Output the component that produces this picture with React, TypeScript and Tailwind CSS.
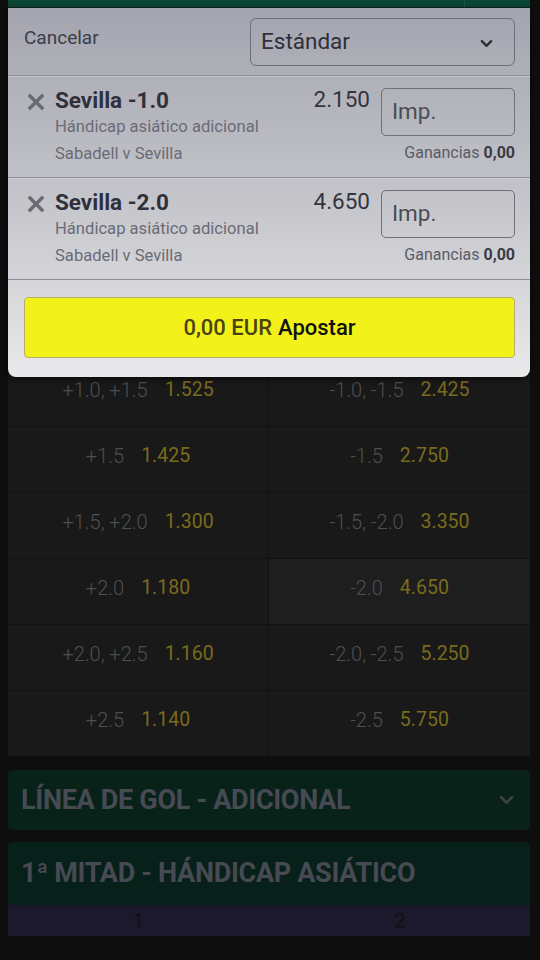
import React from 'react';

type Bet = { pick: string; odds: string };
type Line = { l: string; lo: string; r: string; ro: string; sel?: 'l' | 'r' };

const bets: Bet[] = [
  { pick: 'Sevilla -1.0', odds: '2.150' },
  { pick: 'Sevilla -2.0', odds: '4.650' },
];

const lines: Line[] = [
  { l: '+1.0, +1.5', lo: '1.525', r: '-1.0, -1.5', ro: '2.425' },
  { l: '+1.5', lo: '1.425', r: '-1.5', ro: '2.750' },
  { l: '+1.5, +2.0', lo: '1.300', r: '-1.5, -2.0', ro: '3.350' },
  { l: '+2.0', lo: '1.180', r: '-2.0', ro: '4.650', sel: 'r' },
  { l: '+2.0, +2.5', lo: '1.160', r: '-2.0, -2.5', ro: '5.250' },
  { l: '+2.5', lo: '1.140', r: '-2.5', ro: '5.750' },
];

function Chevron({ className }: { className?: string }) {
  return (
    <svg viewBox="0 0 14 9" className={className} fill="none" stroke="currentColor" strokeWidth="2.6" strokeLinecap="round" strokeLinejoin="round">
      <path d="M2 2l5 5 5-5" />
    </svg>
  );
}

function Cross() {
  return (
    <svg viewBox="0 0 18 18" className="w-[18px] h-[18px] text-[#696a73]" fill="none" stroke="currentColor" strokeWidth="3.4" strokeLinecap="square">
      <path d="M3 3l12 12M15 3L3 15" />
    </svg>
  );
}

function Divider() {
  return (
    <div>
      <div className="h-px bg-[#8d8e97]" />
      <div className="h-px bg-[#d3d4d9] opacity-60" />
    </div>
  );
}

function BetRow({ bet }: { bet: Bet }) {
  return (
    <div className="h-[100px] flex pl-[18px] pr-[15px] pt-[11px]">
      <div className="pt-[5px] w-[19px] flex justify-center">
        <Cross />
      </div>
      <div className="ml-[10px] flex-1 flex flex-col">
        <div className="text-[22.5px] leading-[24px] font-bold text-[#2f303a]">{bet.pick}</div>
        <div className="mt-[5px] text-[16.6px] leading-[20px] text-[#6a6b76]">Hándicap asiático adicional</div>
        <div className="mt-[7px] text-[16.6px] leading-[20px] text-[#6a6b76]">Sabadell v Sevilla</div>
      </div>
      <div className="flex flex-col items-end">
        <div className="flex items-start gap-[11px]">
          <div className="-mt-px text-[22.5px] leading-[24px] text-[#33343e]">{bet.odds}</div>
          <div className="w-[134px] h-[48px] border border-[#6f7079] rounded-[5px] px-[10px] flex items-center text-[22.5px] text-[#4a4b56]">
            Imp.
          </div>
        </div>
        <div className="mt-[7px] text-[16px] leading-[20px] text-[#5a5b66]">
          Ganancias <span className="font-bold text-[#3a3b45]">0,00</span>
        </div>
      </div>
    </div>
  );
}

function Cell({ label, odds, sel }: { label: string; odds: string; sel?: boolean }) {
  return (
    <div className={`h-[66px] flex items-center justify-center gap-[17px] pb-[8px] border-b border-[#111111] ${sel ? 'bg-[#1e1e1e]' : 'bg-[#191919]'}`}>
      <span className="text-[20px] font-light text-[#4f4f4f]">{label}</span>
      <span className="text-[19.5px] text-[#7a6b1c]">{odds}</span>
    </div>
  );
}

export default function App() {
  return (
    <div className="relative w-[540px] h-[960px] overflow-hidden bg-[#0e0e0e] font-['Roboto',sans-serif]">
      {/* page under the bet slip */}
      <div className="px-[8px] pr-[10px]">
        <div className="h-[8px] bg-[#0b4536] border-b border-[#08261e] flex">
          <div className="w-[457px] border-r border-[#135a47]" />
        </div>
        <div className="h-[353px] bg-[#191919]" />
        <div className="grid grid-cols-2">
          {lines.map((ln, i) => (
            <React.Fragment key={i}>
              <div className="border-r border-[#111111]">
                <Cell label={ln.l} odds={ln.lo} sel={ln.sel === 'l'} />
              </div>
              <Cell label={ln.r} odds={ln.ro} sel={ln.sel === 'r'} />
            </React.Fragment>
          ))}
        </div>

        <div className="mt-[13px] h-[60px] rounded-[4px] bg-[#08221a] flex items-center pl-[13px] pr-[16px]">
          <span className="text-[27px] font-bold tracking-[-0.3px] text-[#474a53]">LÍNEA DE GOL - ADICIONAL</span>
          <Chevron className="ml-auto w-[15px] h-[10px] text-[#3c4048]" />
        </div>

        <div className="mt-[12px] h-[63px] rounded-t-[4px] bg-[#08201a] flex items-center pl-[13px]">
          <span className="text-[27px] font-bold tracking-[-0.3px] text-[#474a53]">1ª MITAD - HÁNDICAP ASIÁTICO</span>
        </div>
        <div className="h-[31px] bg-[#1b192b] grid grid-cols-2 text-[20px] text-[#111111]">
          <div className="flex items-center justify-center">1</div>
          <div className="flex items-center justify-center">2</div>
        </div>
      </div>

      {/* bet slip overlay */}
      <div className="absolute left-[8px] top-[8px] w-[522px] rounded-b-[8px] bg-linear-to-b from-[#a3a4ae] via-[#c3c4c9] to-[#e9e9eb] shadow-[0_2px_6px_rgba(0,0,0,0.6)]">
        <div className="h-[67px] flex items-center pl-[16px] pr-[15px]">
          <span className="text-[19px] text-[#3b3d4a] -mt-[6px]">Cancelar</span>
          <div className="ml-auto w-[265px] h-[48px] border border-[#6e6f78] rounded-[6px] pl-[10px] pr-[21px] flex items-center text-[22.5px] text-[#2e2f39]">
            Estándar
            <Chevron className="ml-auto mt-[3px] w-[13px] h-[9px] text-[#2e2f39]" />
          </div>
        </div>
        <Divider />
        {bets.map((b, i) => (
          <React.Fragment key={i}>
            <BetRow bet={b} />
            <Divider />
          </React.Fragment>
        ))}
        <div className="pl-[16px] pr-[15px] pt-[16px] pb-[19px]">
          <div className="h-[61px] rounded-[4px] border border-[#b7ae6c] bg-[#f2f21a] flex items-center justify-center text-[22px] font-medium">
            <span className="text-[#4a4411]">0,00 EUR</span>
            <span className="ml-[6px] text-[#111111]">Apostar</span>
          </div>
        </div>
      </div>
    </div>
  );
}
